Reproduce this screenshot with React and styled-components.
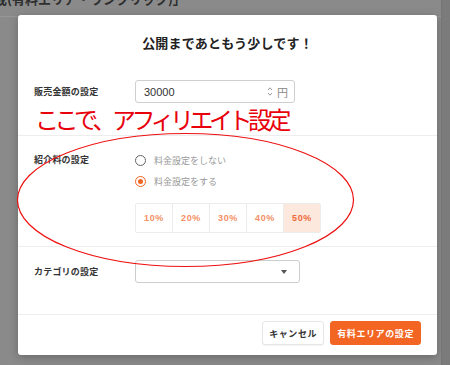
import React from 'react';
import styled, { createGlobalStyle } from 'styled-components';

const GlobalStyle = createGlobalStyle`
  html, body {
    margin: 0;
    padding: 0;
    background: #8a8a8a;
  }
  body {
    font-family: "Noto Sans CJK JP", "Noto Sans", sans-serif;
  }
`;

const Screen = styled.div`
  position: relative;
  width: 450px;
  height: 365px;
  overflow: hidden;
  display: flex;
  background: #8a8a8a;
`;

const Main = styled.div`
  flex: 1;
  display: flex;
  flex-direction: column;
`;

const PageHeader = styled.div`
  height: 16px;
  border-bottom: 1px solid #979797;
  overflow: hidden;
  color: #2e2e2e;
  font-size: 13px;
  font-weight: 700;
  line-height: 13px;
  white-space: nowrap;

  span {
    display: block;
    margin-top: -8px;
    margin-left: -6px;
  }
`;

const SideStrip = styled.div`
  width: 8px;
  background: #7b7b7b;
  border-left: 1px solid #757575;
`;

const Dialog = styled.div`
  margin: -2px 0 0 18px;
  width: 419px;
  height: 340px;
  background: #fff;
  border-radius: 3px;
  box-shadow: 0 2px 8px rgba(0, 0, 0, 0.25);
  display: flex;
  flex-direction: column;
`;

const Title = styled.h1`
  margin: 0;
  padding-top: 18px;
  height: 20px;
  text-align: center;
  font-size: 13px;
  line-height: 20px;
  font-weight: 700;
  color: #222;
  letter-spacing: 0.2px;
`;

const Section = styled.div`
  padding: ${(p) => p.$pad};
  border-bottom: ${(p) => (p.$last ? 'none' : '1px solid #ededed')};
`;

const Row = styled.div`
  display: grid;
  grid-template-columns: 101px auto;
  align-items: ${(p) => p.$align || 'center'};
`;

const Label = styled.div`
  font-size: 9px;
  font-weight: 700;
  color: #333;
  line-height: 16px;
  letter-spacing: 0.2px;
`;

const NumberBox = styled.div`
  width: 160px;
  height: 23px;
  box-sizing: border-box;
  border: 1px solid #cfcfcf;
  border-radius: 3px;
  display: flex;
  align-items: center;
  padding: 0 6px 0 8px;
  font-size: 11px;
  color: #333;
  font-family: "Liberation Sans", "Noto Sans CJK JP", sans-serif;

  .value {
    flex: 1;
  }
  .spin {
    width: 6px;
    height: 11px;
    margin-right: 4px;
  }
  .unit {
    color: #888;
    font-size: 11px;
    font-family: "Noto Sans CJK JP", sans-serif;
  }
`;

const Annotation = styled.div`
  margin: 1px 0 0 1px;
  height: 30px;
  color: #e8000b;
  font-size: 24px;
  line-height: 30px;
  font-weight: 400;
  letter-spacing: -4.5px;
  white-space: nowrap;
`;

const Options = styled.div`
  display: flex;
  flex-direction: column;
  gap: 5px;
`;

const RadioRow = styled.label`
  display: flex;
  align-items: center;
  gap: 8px;
  height: 16px;
  font-size: 9px;
  color: #999;
`;

const RadioDot = styled.span`
  width: 11px;
  height: 11px;
  box-sizing: border-box;
  border-radius: 50%;
  border: 1.5px solid ${(p) => (p.$on ? '#f26522' : '#666')};
  display: flex;
  align-items: center;
  justify-content: center;

  &::after {
    content: '';
    display: ${(p) => (p.$on ? 'block' : 'none')};
    width: 5px;
    height: 5px;
    border-radius: 50%;
    background: #f26522;
  }
`;

const RateGroup = styled.div`
  margin-top: 14px;
  display: flex;
  width: fit-content;
  border: 1px solid #ececec;
  border-radius: 2px;
`;

const RateCell = styled.div`
  width: 36px;
  height: 28px;
  display: flex;
  align-items: center;
  justify-content: center;
  border-left: ${(p) => (p.$first ? 'none' : '1px solid #ececec')};
  background: ${(p) => (p.$active ? '#fde8dd' : '#fff')};
  color: ${(p) => (p.$active ? '#ef6a3a' : '#f39064')};
  font-family: "Liberation Sans", sans-serif;
  font-size: 9px;
  font-weight: 700;
  letter-spacing: 0.6px;
`;

const SelectBox = styled.div`
  width: 165px;
  height: 23px;
  box-sizing: border-box;
  border: 1.5px solid #cdcdcd;
  border-radius: 3px;
  display: flex;
  align-items: center;
  justify-content: flex-end;
  padding-right: 12px;

  &::after {
    content: '';
    border-left: 3.5px solid transparent;
    border-right: 3.5px solid transparent;
    border-top: 4px solid #555;
  }
`;

const Footer = styled.div`
  display: flex;
  justify-content: flex-end;
  gap: 6px;
  padding: 6px 16px 0 0;
`;

const Button = styled.button`
  height: 24px;
  padding: 0 6px;
  border-radius: 3px;
  border: 1px solid ${(p) => (p.$primary ? '#f26522' : '#e6e6e6')};
  background: ${(p) => (p.$primary ? '#f26522' : '#fff')};
  color: ${(p) => (p.$primary ? '#fff' : '#333')};
  font-family: "Noto Sans CJK JP", sans-serif;
  font-size: 9px;
  font-weight: 700;
  letter-spacing: 0.6px;
  cursor: pointer;
  box-shadow: ${(p) => (p.$primary ? 'none' : '0 1px 1px rgba(0,0,0,0.05)')};
`;

const Ellipse = styled.svg`
  position: absolute;
  left: 16px;
  top: 132px;
  width: 339px;
  height: 136px;
  pointer-events: none;
`;

const rates = ['10%', '20%', '30%', '40%', '50%'];

const App = () => {
  return (
    <>
      <GlobalStyle />
      <Screen>
        <Main>
          <PageHeader>
            <span>成(有料エリア・ワンクリック)」</span>
          </PageHeader>
          <Dialog>
            <Title>公開まであともう少しです！</Title>

            <Section $pad="27px 0 1px 16px">
              <Row>
                <Label>販売金額の設定</Label>
                <NumberBox>
                  <span className="value">30000</span>
                  <svg className="spin" viewBox="0 0 6 11">
                    <path d="M1 4 L3 1.8 L5 4" fill="none" stroke="#999" strokeWidth="1" />
                    <path d="M1 7 L3 9.2 L5 7" fill="none" stroke="#999" strokeWidth="1" />
                  </svg>
                  <span className="unit">円</span>
                </NumberBox>
              </Row>
              <Annotation>ここで、アフィリエイト設定</Annotation>
            </Section>

            <Section $pad="16px 0 13px 16px">
              <Row $align="start">
                <Label>紹介料の設定</Label>
                <div>
                  <Options>
                    <RadioRow>
                      <RadioDot />
                      料金設定をしない
                    </RadioRow>
                    <RadioRow>
                      <RadioDot $on />
                      料金設定をする
                    </RadioRow>
                  </Options>
                  <RateGroup>
                    {rates.map((r, i) => (
                      <RateCell key={r} $first={i === 0} $active={r === '50%'}>
                        {r}
                      </RateCell>
                    ))}
                  </RateGroup>
                </div>
              </Row>
            </Section>

            <Section $pad="13px 0 31px 16px">
              <Row>
                <Label>カテゴリの設定</Label>
                <SelectBox />
              </Row>
            </Section>

            <Footer>
              <Button>キャンセル</Button>
              <Button $primary>有料エリアの設定</Button>
            </Footer>
          </Dialog>
        </Main>
        <SideStrip />
        <Ellipse viewBox="0 0 339 136">
          <ellipse cx="169.5" cy="68" rx="168" ry="66.5" fill="none" stroke="#ee1111" strokeWidth="1.2" />
        </Ellipse>
      </Screen>
    </>
  );
};

export default App;
